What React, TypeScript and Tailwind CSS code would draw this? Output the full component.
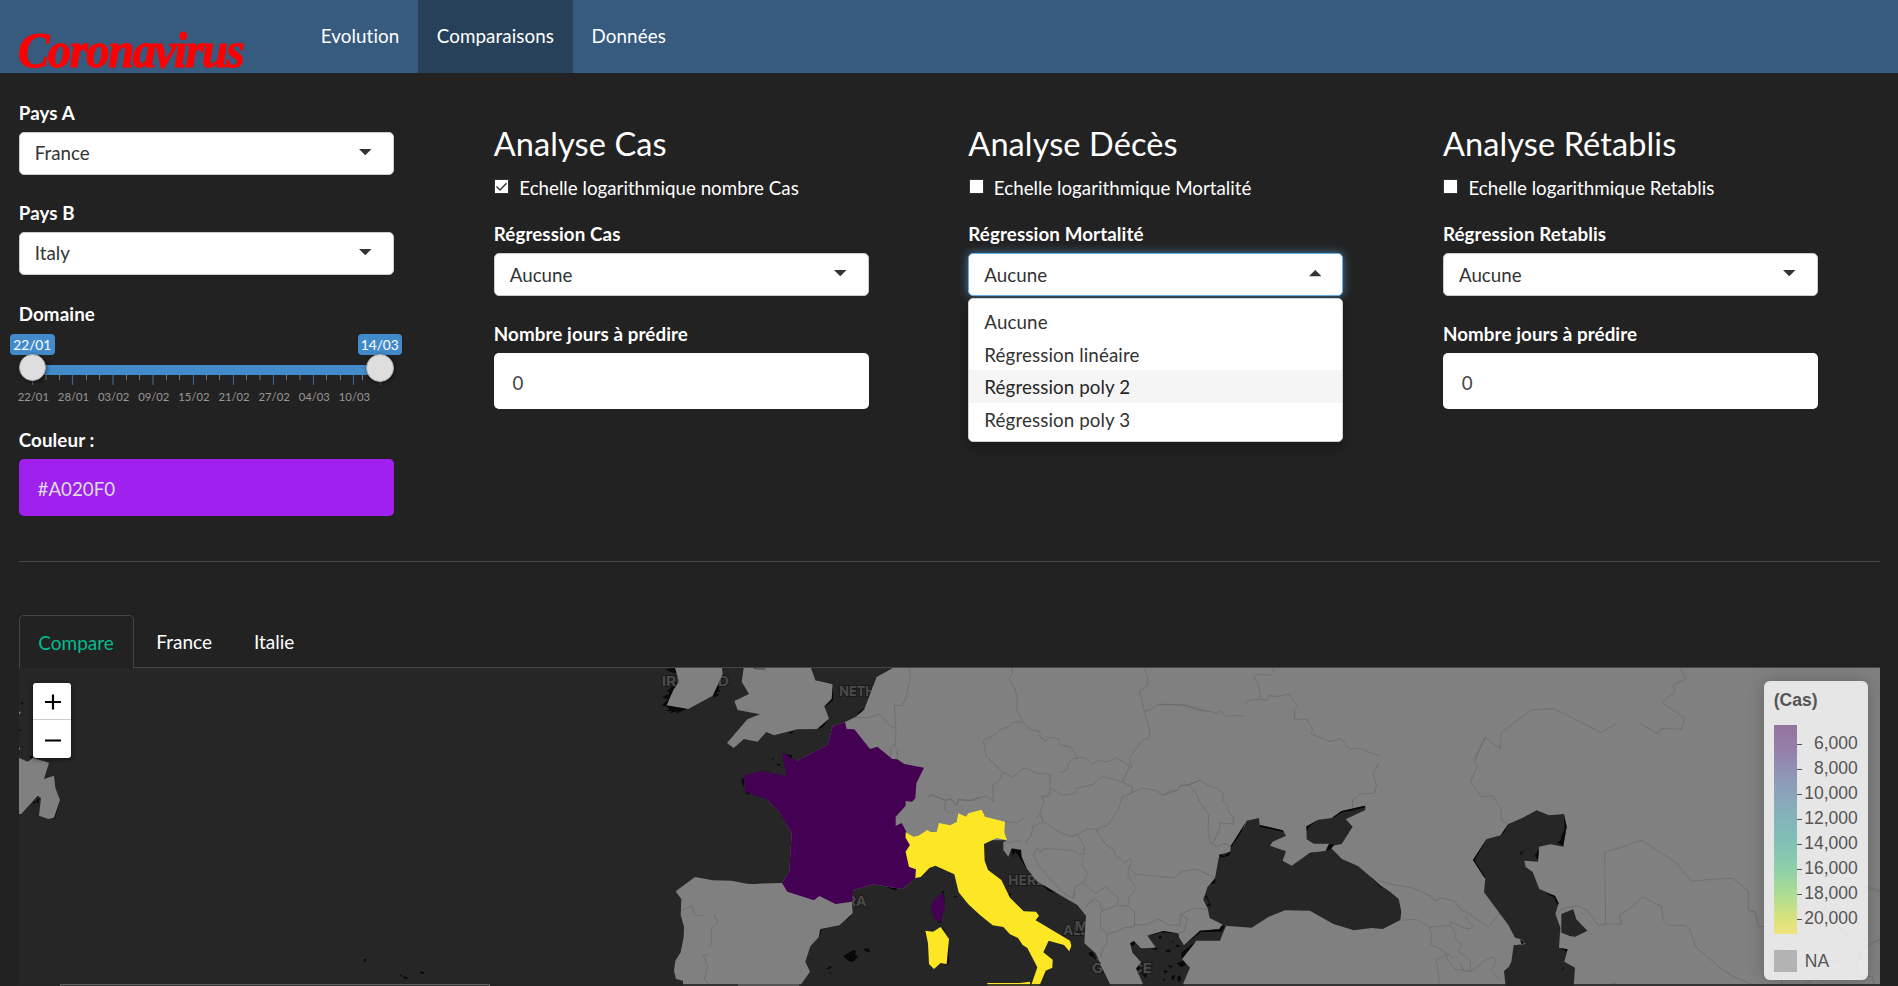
import React from "react";
import clsx from "clsx";

const LABEL =
  "block h-[26.8px] text-[18.75px] leading-[28.8px] font-bold tracking-[0.1px] whitespace-nowrap text-white";

function Caret({ up = false }: { up?: boolean }) {
  return (
    <svg width="12.5" height="6.25" viewBox="0 0 10 5" className="mb-[2px]">
      <path d={up ? "M0 5L5 0L10 5Z" : "M0 0L10 0L5 5Z"} fill="#333" />
    </svg>
  );
}

function Select({ value, open = false }: { value: string; open?: boolean }) {
  return (
    <div
      className={clsx(
        "flex h-[42.4px] w-[375px] items-center justify-between rounded-[5px] border bg-white pr-[21px] pl-[15px] text-[18.75px] leading-[26.8px] text-[#333]",
        open ? "border-[#66afe9] shadow-[0_0_10px_rgba(102,175,233,0.6)]" : "border-[#ccc]",
      )}
    >
      <span className="pt-px">{value}</span>
      <Caret up={open} />
    </div>
  );
}

function Field({ label, children }: { label: string; children: React.ReactNode }) {
  return (
    <div className="h-[100px]">
      <div className={LABEL}>{label}</div>
      <div className="relative mt-[6.2px]">{children}</div>
    </div>
  );
}

function Menu() {
  const options = ["Aucune", "Régression linéaire", "Régression poly 2", "Régression poly 3"];
  return (
    <div className="absolute top-[45px] left-0 z-10 w-[375px] rounded-[5px] border border-[#d0d0d0] bg-white pt-[6px] pb-[6px] shadow-[0_6px_12px_rgba(0,0,0,0.3)]">
      {options.map((o, i) => (
        <div
          key={o}
          className={clsx(
            "h-[32.5px] pl-[15px] text-[18.75px] leading-[33px] tracking-[0.1px]",
            i === 2 ? "bg-[#f5f5f5] text-[#262626]" : "text-[#333]",
          )}
        >
          {o}
        </div>
      ))}
    </div>
  );
}

function Analysis({
  title,
  check,
  regression,
  checked = false,
  open = false,
}: {
  title: string;
  check: string;
  regression: string;
  checked?: boolean;
  open?: boolean;
}) {
  return (
    <section className="w-[474.6px] shrink-0 pt-[26.4px]">
      <h3 className="h-[35.75px] text-[32.5px] leading-[35.75px] tracking-[0.1px] text-white">{title}</h3>
      <div className="mt-[13.1px] flex h-[45.8px] items-start text-[18.75px] leading-[28.4px] text-white">
        <span className="mt-[5px] mr-[10px] ml-[0.5px] flex size-[15px] shrink-0 items-center justify-center border border-[#333] bg-white">
          {checked && (
            <svg width="13" height="13" viewBox="0 0 13 13">
              <path d="M1.5 6.5L5 10L11.5 3.2" fill="none" stroke="#333" strokeWidth="1.4" />
            </svg>
          )}
        </span>
        <span>{check}</span>
      </div>
      <Field label={regression}>
        <Select value="Aucune" open={open} />
        {open && <Menu />}
      </Field>
      {!open && (
        <Field label="Nombre jours à prédire">
          <div className="flex h-[56.2px] w-[375px] items-center rounded-[5px] bg-white pt-[3px] pl-[18.75px] text-[18.75px] text-[#464545]">
            0
          </div>
        </Field>
      )}
    </section>
  );
}

const TICKS = ["22/01", "28/01", "03/02", "09/02", "15/02", "21/02", "27/02", "04/03", "10/03"];
const MINOR = [46, 59.5, 86.5, 99.5, 126.5, 139.5, 166.5, 179.5, 206.5, 219.5, 246.5, 260, 286.5, 300, 326.5, 340.5, 362.5];
const MAJOR = [32.5, 72.5, 113, 153, 193.5, 233.5, 273.5, 313.5, 353.5, 380.5];

function Slider() {
  return (
    <div className="relative mt-[7px] h-[70px] w-[375px]">
      <svg className="absolute -left-[19px] top-[41px]" width="420" height="11">
        {MINOR.map((x) => (
          <line key={x} x1={x} x2={x} y1="0" y2="5" stroke="#777" />
        ))}
        {MAJOR.map((x) => (
          <line key={x} x1={x} x2={x} y1="0" y2="10" stroke="#38658f" strokeWidth="1.2" />
        ))}
      </svg>
      <div className="absolute top-[31px] left-[14px] h-[10px] w-[350px] bg-[#428bca]" />
      <div className="absolute top-0 -left-[9px] h-[21px] w-[45px] rounded-[4px] bg-[#428bca] text-center text-[13.75px] leading-[22px] text-white">
        22/01
      </div>
      <div className="absolute top-0 left-[339px] h-[21px] w-[44px] rounded-[4px] bg-[#428bca] text-center text-[13.75px] leading-[22px] text-white">
        14/03
      </div>
      <div className="absolute top-[20.5px] left-0 size-[27px] rounded-full border border-[#aaa] bg-[#dedede] shadow-[1px_1px_4px_rgba(0,0,0,0.5)]" />
      <div className="absolute top-[20.5px] left-[347.5px] size-[27.5px] rounded-full border border-[#aaa] bg-[#dedede] shadow-[1px_1px_4px_rgba(0,0,0,0.5)]" />
      <div className="absolute top-[55px] -left-[5.5px] flex text-[11.25px] leading-[16px] text-[#999]">
        {TICKS.map((t) => (
          <span key={t} className="w-[40.15px] text-center whitespace-nowrap">
            {t}
          </span>
        ))}
      </div>
    </div>
  );
}

function MapLabel({ x, y, w, children }: { x: number; y: number; w: number; children: string }) {
  return (
    <text
      x={x}
      y={y}
      textLength={w}
      lengthAdjust="spacingAndGlyphs"
      fontFamily="Inter, sans-serif"
      fontSize="40"
      fontWeight="700"
      fill="#4a4a4a"
      stroke="#1a1a1a"
      strokeWidth="6"
      paintOrder="stroke"
    >
      {children}
    </text>
  );
}

/* Country shapes are stored at three units per screen pixel, in four sheets from west to east. */
function EuropeMap() {
  return (
    <svg className="block" width="1861" height="318" viewBox="19 668 1861 318">
      <defs>
        <clipPath id="frame">
          <rect x="19" y="668" width="1861" height="318" />
        </clipPath>
      </defs>
      <g clipPath="url(#frame)">
        <rect x="19" y="668" width="1861" height="318" fill="#262626" />

        <g transform="translate(0 590) scale(0.33333)">
          <path fill="#080808" d="M62 342l7 -7v6l-5 4zM57 420l4 -2v5h-4zM85 500l16 -3l-5 9zM57 640l12 -5l-6 10zM98 640l16 -14l4 -2l-3 14l-6 2l3 -10l-10 12zM180 632l-16 54l-8 -2z" />
          <path fill="#808080" d="M57 365l6 0l-4 8h-2zM57 473h4l-2 6h-2zM57 503L83 515L99 504L147 518L132 567L162 557L166 593L180 630L162 683L145 687L117 677L123 624L113 617L64 672L57 672Z" />
        </g>

        <g transform="translate(640 650) scale(0.33333)">
          <path
            fill="#080808"
            d="M75 58L107 54L115 72L92 66ZM110 95L80 125L92 128L66 142L84 148L66 166L82 170L88 178L76 182L95 184L90 190L112 184L110 191L140 177L150 140ZM218 128L248 92L236 118L242 122L228 130L238 134L222 143ZM526 90L545 95L578 99L580 150L553 172ZM567 206L548 232L531 237ZM444 246L462 244L454 252ZM672 172L650 192L662 188ZM715 78L758 54L740 62ZM305 388L314 384L312 412L305 396ZM314 420L330 432L322 434ZM416 486L440 518L436 520ZM430 314L455 314L456 326L440 324ZM410 342l12 0l-2 5l-8 -1zM396 324l5 2l-4 5zM736 710L775 716L765 721ZM325 703L360 697L345 702ZM538 840L545 838L540 858ZM636 785L630 800L618 812ZM610 918L640 900L648 902L646 915L655 918L640 935L624 932ZM669 897L684 895L692 906L680 905ZM560 957L570 948L576 952L566 958ZM568 966l6 0l-2 6zM938 738l14 1l-4 4zM860 844l-5 6l6 12zM904 725l8 -3l2 40l-4 -30zM889 808l8 12l10 -3l-6 -5zM900 831l16 10l-4 3zM925 866l2 74l-8 6z"
          />
          <MapLabel x={65} y={109} w={202}>IRELAND</MapLabel>
          <MapLabel x={598} y={138} w={286}>NETHERLANDS</MapLabel>
          <MapLabel x={465} y={769} w={215}>ANDORRA</MapLabel>
          <path
            fill="#080808"
            d="M1114 597L1145 600L1146 616L1162 640L1172 655L1160 656L1140 625L1128 606L1117 618ZM1195 695L1255 722L1240 728L1260 735L1225 722ZM1100 732L1116 731L1102 748ZM1345 908L1357 905L1370 930L1350 916Z"
          />
          <MapLabel x={1105} y={704} w={300}>HERZEGOVINA</MapLabel>
          <MapLabel x={1270} y={856} w={180}>ALBANIA</MapLabel>
          <MapLabel x={1304} y={842} w={265}>MACEDONIA</MapLabel>
          <g fill="#808080">
            <path d="M105 54L117 95L100 120L80 166L145 177L218 137L248 72L246 54Z" />
            <path d="M311 54L305 95L327 132L283 153L293 180L360 193L322 208L261 279L281 294L312 267L353 275L379 246L402 256L472 238L531 237L567 206L553 169L575 146L578 102L526 91L513 54Z" />
            <path d="M758 54L710 81L672 180L648 200L615 216L578 228L563 284L470 333L440 379L380 448L418 486L455 550L448 663L426 699L325 702L275 692L218 691L165 681L107 724L124 748L122 795L132 830L131 862L122 907L106 932L102 963L108 987L129 992L129 1010L480 1010L484 1002L510 965L496 935L511 889L536 862L541 837L598 826L638 790L636 755L640 720L699 703L787 717L827 684L960 570L1101 571L1090 577L1090 600L1105 620L1115 595L1143 599L1145 620L1160 655L1190 693L1260 735L1312 765L1338 797L1333 880L1367 910L1385 950L1405 985L1412 1010L3720 1010L3720 54Z" />
          </g>
          <path d="M340 54L352 57L376 57" fill="none" stroke="#222" strokeWidth="2" />
          <g fill="#440154">
            <path d="M615 216L620 237L643 238L690 297L712 290L757 327L772 328L793 342L852 353L829 400L826 445L816 455L797 453L797 467L767 500L767 528L785 519L799 545L797 563L810 585L797 605L807 650L828 658L827 684L787 717L699 703L640 720L636 755L587 762L538 738L522 751L442 725L426 699L448 663L455 550L418 486L380 448L316 426L312 376L369 362L440 379L426 307L470 333L563 284L578 228Z" />
            <path d="M909 726L915 772L902 818L883 808L872 770L880 752Z" />
          </g>
          <path fill="#fde725" d="M856 842L879 845L902 831L927 867L920 942L902 939L882 957L867 942L864 880Z" />
          <g fill="none" stroke="#6a6a6a" strokeWidth="2.2">
            <path d="M806 54L812 76L799 140L788 166L763 166L768 237L765 288L773 300L771 327M768 237L745 222L720 193L683 203L645 202M765 282L754 288L751 322" />
            <path d="M124 783L155 766L166 796L195 796M222 792L233 818L214 834L214 880L208 888M207 913L190 916L203 950L193 988L207 1002" />
            <path d="M865 442L872 433L918 451L933 448L951 465L956 449L996 452L1020 444M918 451L913 478L930 488" />
          </g>
        </g>

        <g transform="translate(860 650) scale(0.33333)">
          <path fill="#262626" d="M845 1010L848 1000L828 955L843 937L818 910L810 880L822 873L843 895L888 893L862 857L910 843L956 850L957 862L972 886L1020 842L1078 837L1087 824L1098 827L1080 872L1007 872L966 927L990 953L970 1000L972 1010Z" />
          <path
            fill="#080808"
            d="M964 908L1010 872L965 928ZM972 886L1020 842L1078 838L1086 826L1096 828L1083 845L1022 846ZM862 857L910 843L945 850L900 847L888 852ZM895 860l8 -3l2 6l-8 3zM915 902l12 -4l6 4l-8 6zM935 872l6 0l-1 6zM950 884l10 2l-5 6l-8 -3zM950 940l20 -8l8 12l-14 8zM925 945l14 4l-8 5zM910 960l14 3l-8 8zM935 978l10 -4l-2 14l-8 3zM952 980l10 -4l2 12l-8 10zM908 985l7 3l-5 6zM826 955l14 -10l6 16l15 12l-6 12l-8 -14zM810 880l12 -7l4 8l-10 8zM890 900l-20 -4l22 -4z"
          />
          <MapLabel x={695} y={969} w={181}>GREECE</MapLabel>
          <path fill="#808080" d="M722 920L818 910L843 937L828 955L846 1002L750 1002L722 945Z" />
          <path
            fill="#fde725"
            d="M137 547L160 560L175 557L202 540L212 546L230 546L237 519L270 526L290 516L295 490L318 500L325 490L365 479L375 500L435 515L433 547L441 571L410 564L372 582L374 632L384 660L424 690L450 743L491 784L528 785L537 797L527 811L630 872L634 887L628 904L612 885L566 872L550 907L578 929L577 953L557 962L537 1010L512 1010L532 952L502 894L488 885L474 864L450 853L430 831L398 826L360 795L325 763L296 727L283 673L226 647L208 654L182 681L166 684L168 658L147 650L137 605L150 585L137 563ZM382 999L480 999L510 995L510 1010L382 1010Z"
          />
          <g fill="none" stroke="#6a6a6a" strokeWidth="2.2">
            <path d="M455 54L458 68L447 87L464 114L472 142L470 178L488 215L508 238L540 245L540 262L558 274L569 261L597 268L600 285L632 291L654 323L673 322L695 341L718 332L744 335L770 324L816 352L808 325L846 272L868 264L870 245L853 184L838 122L862 107L862 80L853 54" />
            <path d="M488 215L458 218L445 231L418 240L400 258L370 271L379 319L428 366L458 383L488 356L502 356L528 370L562 371L570 380L578 370M428 366L415 395L398 405L400 453L380 438L350 445L328 451L296 449L291 465L270 446L256 451L210 433L205 442M598 368L620 360L625 342L638 325M654 325L640 325" />
            <path d="M570 380L570 413L608 436L646 430L648 416L662 412L700 403L724 382L740 382L788 397L816 410L816 428L850 415L888 421L908 435L935 423L952 421L962 407L985 405L1020 391M788 397L808 350M853 184L870 180L892 163L975 165L1040 183" />
            <path d="M570 413L568 437L545 440L552 452L540 490L550 515L600 548L634 560L652 553L680 537L708 538L744 525L774 480L788 440L816 428M540 490L530 504M550 515L518 530L514 558L500 570L500 578M435 515L470 518L492 504M441 576L460 577L470 570L482 578" />
            <path d="M652 553L674 590L670 612L658 613L640 602L572 596L548 597L545 606L530 596L520 614L538 650L578 695L604 723L638 746L645 712L670 697L684 668L665 645L670 620M670 697L705 731L736 711L776 745L768 768L725 782L720 758L703 748L675 772M690 745L700 755M638 746L650 725" />
            <path d="M708 538L738 585L762 600L764 614L795 638L810 625L815 635L804 660L805 680L830 714L808 740L803 768L776 768M803 768L824 787L823 830L792 833L770 845L742 850L722 835L722 790M823 824L860 824L894 807L930 826L960 825L962 793L983 807L972 845L960 848M742 850L740 882L728 893L724 915L710 930M815 660L826 673L940 683L968 664L1008 658L1070 684M962 793L1000 775L1044 778" />
          </g>
        </g>

        <g transform="translate(1160 650) scale(0.33333)">
          <path fill="#262626" d="M260 512L297 504L299 525L368 541L378 557L338 575L330 587L378 604L368 632L395 647L449 609L498 602L507 583L516 597L546 627L595 649L660 705L690 725L716 747L724 785L721 810L668 837L635 834L582 841L520 822L450 782L375 781L325 801L275 833L195 827L149 804L143 775L130 750L142 712L165 685L178 614L211 605L212 588L246 545Z" />
          <path fill="#262626" d="M439 529L475 509L515 504L545 483L615 467L616 480L557 508L578 530L545 582L517 587L507 600L498 600L507 581L461 581L440 568Z" />
          <path
            fill="#080808"
            d="M300 525L368 541L372 546L330 537L298 530ZM515 504L545 483L615 467L616 472L575 482L548 487L525 500ZM439 530L475 509L450 528L441 542ZM178 612L192 618L211 604L208 617L190 622L180 620ZM165 685L152 702L166 700ZM507 583L524 584L512 597L498 603ZM630 678L664 710L668 716L655 705ZM212 588L256 518L246 545L214 590ZM395 647L449 609L475 605L445 612ZM130 745L140 735L153 768L138 768L148 760L139 742Z"
          />
          <g fill="none" stroke="#6a6a6a" strokeWidth="2.2">
            <path d="M336 54L342 62L330 76L288 73L283 80L295 105L303 147L265 152L253 166M303 147L320 152L330 136L342 140L388 133L413 170L404 180L404 208L440 208L458 238L454 252L510 275L542 265L568 297L598 295L657 317M657 337L639 370L650 407L643 429L600 433L578 451L578 474" />
            <path d="M0 163L45 163L75 167L115 181L152 185L171 192L184 182L195 199L235 196L252 200M0 430L8 436L52 421L65 406L85 405L120 391L150 408L170 414L188 429L189 452L203 466L206 486L220 503L222 521L190 521L180 517L179 536L161 576L151 579L144 550L146 495L120 458L108 430L85 405M151 579L170 590L192 580L212 588" />
            <path d="M655 692L700 704L755 713L815 740L824 752L846 744L885 754L902 778L932 794L980 829L988 829L1020 790M724 811L768 808L808 832L870 826L874 816L912 834L930 836L938 829L917 802L922 794M808 832L814 852L812 883L850 902L860 912L829 929L838 1000M870 826L889 852L883 864L904 884L895 905L931 929L931 965L912 962L886 958L862 928L860 912L868 913L879 923M898 937L913 963M931 965L992 921L1000 922L1008 936L995 960L1020 990M943 334L953 347L931 395L965 440L998 437L1024 478L1024 510L1045 522M943 334L976 262L1021 296L1024 248L1115 179L1182 176L1325 248L1369 220M976 262L943 325" />
          </g>
        </g>

        <g transform="translate(1440 650) scale(0.33333)">
          <path fill="#262626" d="M205 522L247 504L290 481L327 496L372 492L380 530L370 590L332 583L297 590L294 635L253 632L257 651L278 666L298 717L345 737L356 760L346 792L361 833L357 893L383 898L373 935L405 953L401 1010L197 1010L192 963L207 950L214 935L221 886L257 882L243 868L225 863L205 825L132 727L136 686L99 630L139 568L182 556ZM364 792L399 778L409 808L442 842L406 860L364 848Z" />
          <path
            fill="#080808"
            d="M372 495L380 530L369 588L362 582L350 580L360 572L374 535ZM297 597L294 630L284 616ZM99 630L139 568L110 620L104 632L137 684L132 682ZM205 522L182 556L192 548ZM315 728L345 737L356 760L352 765L343 743ZM345 785L364 840L350 800ZM368 848L406 860L390 858ZM360 895L383 898L380 905ZM240 606L255 603L244 608L250 615L243 614ZM399 778L408 806L400 785ZM370 950l-4 12l6 -4zM240 868l14 12l-10 2z"
          />
          <g fill="none" stroke="#6a6a6a" strokeWidth="2.2">
            <path d="M720 54L739 87L700 105L705 126L665 158L735 204L724 238L664 235L654 251L598 220M494 608L605 571L710 640L754 694L815 688L878 685L925 723L925 782L946 786L954 829L1010 831M494 608L497 822L545 823L538 794L570 775L608 741L664 769L670 812L686 826L735 826L747 834L769 892L845 958L890 985L932 1001M350 795L366 776L412 767L442 781L474 826L497 822" />
            <path d="M985 945L1000 905L1060 880L1118 843L1120 880L1165 887L1222 850L1135 780L1115 800M1222 850L1190 825M1270 706L1320 725M1320 868L1288 884L1256 905L1262 928L1250 935L1254 980L1298 980L1302 1002M985 945L1023 955L1025 1002M1090 1002L1130 985L1150 995M1256 930L1150 932M510 1002L530 999" />
          </g>
        </g>

        <rect x="19" y="984" width="1861" height="2" fill="#262626" opacity="0.85" />
        <rect x="738" y="984" width="61" height="2" fill="#555" />
        <rect x="60" y="984" width="430" height="2" fill="#383838" />
        <path d="M60.5 986V984.5H489.5V986" fill="none" stroke="#606060" />
        <path fill="#080808" d="M364 959l2 0v3h-2zM399 974l3 1l-1 2zM403 976l6 2l-2 1l-4 -1zM407 973l7 3zM420 971l4 1l0 2l-4 -1z" />
      </g>
    </svg>
  );
}

const LEGEND = ["6,000", "8,000", "10,000", "12,000", "14,000", "16,000", "18,000", "20,000"];

function Legend() {
  return (
    <div className="absolute top-[13px] left-[1745px] h-[299px] w-[104px] rounded-[6px] bg-white/80 px-[10px] pt-[8px] font-['Liberation_Sans',Arial,sans-serif] text-[17.5px] text-[#555] shadow-[0_0_18px_rgba(0,0,0,0.2)]">
      <div className="h-[36px] leading-[22px] font-bold">(Cas)</div>
      <div className="flex h-[225px]">
        <div className="h-[209px] w-[23px] bg-[linear-gradient(#94729c_0%,#9485ae_15%,#8ca0b9_30%,#84b3ba_44%,#80c2b5_57%,#8dd0aa_69%,#b0de90_82%,#dfe27d_94%,#eee47f_100%)]" />
        <div className="flex flex-1 flex-col pt-[7px]">
          {LEGEND.map((v) => (
            <div key={v} className="flex h-[25px] items-center justify-between">
              <span className="h-px w-[5px] bg-[#555]" />
              <span className="-mt-[3px]">{v}</span>
            </div>
          ))}
        </div>
      </div>
      <div className="flex items-center">
        <div className="h-[22px] w-[23px] bg-[#b3b3b3]" />
        <span className="ml-[8px] leading-[22px]">NA</span>
      </div>
    </div>
  );
}

export default function App() {
  return (
    <div className="flex h-[986px] w-[1898px] flex-col overflow-hidden bg-[#222] font-[Lato,sans-serif] text-[18.75px]">
      <header className="flex h-[73px] shrink-0 bg-[#375a7f] text-white">
        <div className="w-[302px] pt-[23px] pl-[18px]">
          <span className="inline-block origin-left scale-x-[0.92] font-['Liberation_Serif',serif] text-[51px] leading-[54px] font-bold tracking-[-1.7px] text-[#f00] italic [-webkit-text-stroke:1px_#f00]">
            Coronavirus
          </span>
        </div>
        <nav className="flex leading-[71px] tracking-[0.1px]">
          <a className="h-[73px] px-[18.75px]">Evolution</a>
          <a className="h-[73px] bg-[#28415b] px-[18.75px]">Comparaisons</a>
          <a className="h-[73px] px-[18.75px]">Données</a>
        </nav>
      </header>

      <main className="flex flex-1 flex-col px-[18.75px] pt-[26.2px]">
        <div className="flex h-[462.2px] shrink-0">
          <section className="w-[475px] shrink-0">
            <Field label="Pays A">
              <Select value="France" />
            </Field>
            <Field label="Pays B">
              <Select value="Italy" />
            </Field>
            <div className="h-[127px] pt-[1px]">
              <div className={LABEL}>Domaine</div>
              <Slider />
            </div>
            <Field label="Couleur :">
              <div className="flex h-[57px] w-[375px] items-center rounded-[5px] bg-[#a020f0] pt-[2px] pl-[18.75px] text-[#ddd]">
                #A020F0
              </div>
            </Field>
          </section>
          <Analysis title="Analyse Cas" check="Echelle logarithmique nombre Cas" regression="Régression Cas" checked />
          <Analysis title="Analyse Décès" check="Echelle logarithmique Mortalité" regression="Régression Mortalité" open />
          <Analysis title="Analyse Rétablis" check="Echelle logarithmique Retablis" regression="Régression Retablis" />
        </div>

        <hr className="w-[1861px] shrink-0 border-[#464545]" />

        <div className="mt-[52.6px] flex h-[53px] w-[1861px] shrink-0 leading-[53px] text-white">
          <div className="w-[115.5px] rounded-t-[5px] border border-b-0 border-[#464545] pl-[18.5px] text-[19px] text-[#00bc8c]">
            Compare
          </div>
          <div className="flex flex-1 border-b border-[#464545] text-[19px]">
            <a className="pr-[20px] pl-[22px]">France</a>
            <a className="pl-[22px]">Italie</a>
          </div>
        </div>

        <div className="relative h-[318px] w-[1861px] shrink-0">
          <EuropeMap />
          <div className="absolute top-[15px] left-[14px] w-[38px] overflow-hidden rounded-[3px] bg-white shadow-[0_1px_5px_rgba(0,0,0,0.65)]">
            <div className="flex h-[37px] items-center justify-center border-b border-[#ccc] pt-[3px] pl-[2px]">
              <svg width="16" height="16" viewBox="0 0 16 16">
                <path d="M0 8H16M8 0.5V15.5" stroke="#000" strokeWidth="2.2" />
              </svg>
            </div>
            <div className="flex h-[38px] items-center justify-center pt-[2px] pl-[2px]">
              <svg width="16" height="16" viewBox="0 0 16 16">
                <path d="M0 8.5H16" stroke="#000" strokeWidth="2.2" />
              </svg>
            </div>
          </div>
          <Legend />
        </div>
      </main>
    </div>
  );
}
